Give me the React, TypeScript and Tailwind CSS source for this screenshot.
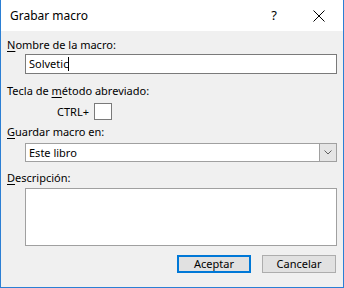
import React from "react";

const font = { fontFamily: '"Noto Sans", "Open Sans", sans-serif' };

function U({ c }: { c: string }) {
  return <span className="underline underline-offset-2">{c}</span>;
}

export default function App() {
  return (
    <div
      className="w-[344px] h-[288px] flex flex-col bg-[#f0f0f0] border-x border-b border-[#2b7fd4] text-[11px] text-black overflow-hidden"
      style={font}
    >
      <div className="h-[31px] bg-white flex items-center shrink-0">
        <span className="pl-[9px] text-[12px]">Grabar macro</span>
        <span className="ml-auto w-[46px] text-center text-[13px] mr-[0px] pl-[2px]">?</span>
        <span className="w-[46px] flex justify-center mr-[1px]">
          <svg width="12" height="12" viewBox="0 0 12 12">
            <path d="M0.5 0.5 L11.5 11.5 M11.5 0.5 L0.5 11.5" stroke="#000" strokeWidth="1" />
          </svg>
        </span>
      </div>
      <div className="flex flex-col pl-[6px] pr-[6px] pt-[6px]">
        <div className="leading-[16px] h-[16px]">
          <U c="N" />ombre de la macro:
        </div>
        <div className="ml-[18px] mt-[1px] h-[20px] bg-white border border-[#7a7a7a] flex items-center pl-[3px] leading-[16px]">
          Solvetic<span className="inline-block w-px h-[14px] bg-black" />
        </div>
        <div className="leading-[16px] h-[16px] mt-[9px]">
          Tecla de <U c="m" />étodo abreviado:
        </div>
        <div className="flex items-center mt-[4px] h-[17px]">
          <span className="ml-[50px] leading-[16px]">CTRL+</span>
          <span className="ml-[5px] w-[18px] h-[17px] bg-white border border-[#7a7a7a]" />
        </div>
        <div className="leading-[16px] h-[16px] mt-[4px]">
          <U c="G" />uardar macro en:
        </div>
        <div className="ml-[18px] mt-[3px] h-[19px] bg-white border border-[#a0a0a0] flex items-center">
          <span className="pl-[3px] leading-[16px]">Este libro</span>
          <span className="ml-auto w-[17px] h-full bg-[#e5e5e5] border-l border-[#a0a0a0] flex items-center justify-center">
            <svg width="8" height="5" viewBox="0 0 8 5">
              <path d="M0.5 0.5 L4 4 L7.5 0.5" stroke="#606060" strokeWidth="1" fill="none" />
            </svg>
          </span>
        </div>
        <div className="leading-[16px] h-[16px] mt-[8px]">
          <U c="D" />escripción:
        </div>
        <div className="ml-[18px] mt-[2px] h-[58px] bg-white border border-[#a0a0a0]" />
        <div className="flex justify-end mt-[9px] pr-[1px] gap-[11px]">
          <button className="w-[74px] h-[18px] bg-[#e1e1e1] border border-[#0078d7] outline outline-1 outline-[#0078d7] -outline-offset-2 flex items-center justify-center leading-[16px]">
            Aceptar
          </button>
          <button className="w-[74px] h-[18px] bg-[#e1e1e1] border border-[#adadad] flex items-center justify-center leading-[16px]">
            Cancelar
          </button>
        </div>
      </div>
    </div>
  );
}
